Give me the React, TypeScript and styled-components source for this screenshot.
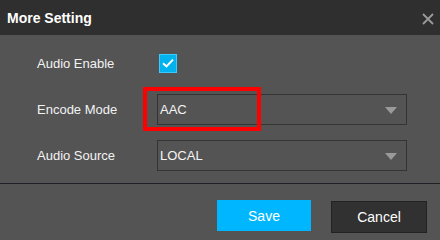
import React from 'react';
import styled, { createGlobalStyle } from 'styled-components';

const GlobalStyle = createGlobalStyle`
  html, body {
    margin: 0;
    padding: 0;
    background: #545454;
  }
  body {
    font-family: "Liberation Sans", Arial, sans-serif;
  }
`;

const Dialog = styled.div`
  width: 440px;
  height: 240px;
  background: #545454;
  display: flex;
  flex-direction: column;
  overflow: hidden;
`;

const Header = styled.div`
  height: 35px;
  background: #2f2f2f;
  display: flex;
  align-items: center;
  justify-content: space-between;
  padding: 0 4px 0 7px;
  box-sizing: border-box;
`;

const Title = styled.h2`
  margin: 0;
  color: #fff;
  font-size: 14px;
  font-weight: bold;
`;

const CloseButton = styled.button`
  width: 16px;
  height: 16px;
  padding: 0;
  border: 0;
  background: none;
  display: flex;
  align-items: center;
  justify-content: center;
  margin-top: 2px;
`;

const Body = styled.div`
  padding: 12px 0 12px 37px;
  display: flex;
  flex-direction: column;
  gap: 14px;
  border-bottom: 1px solid #1f1f26;
`;

const Row = styled.div`
  height: 32px;
  display: grid;
  grid-template-columns: 120px 250px;
  align-items: center;
`;

const Label = styled.span`
  color: #f2f2f2;
  font-size: 13px;
`;

const CheckBox = styled.span`
  width: 16px;
  height: 17px;
  margin-left: 2px;
  background: #00b2ee;
  border: 1px solid #3ccaff;
  display: flex;
  align-items: center;
  justify-content: center;
`;

const SelectWrap = styled.div`
  position: relative;
`;

const Select = styled.div`
  height: 31px;
  box-sizing: border-box;
  border: 1px solid #343434;
  display: flex;
  align-items: center;
  justify-content: space-between;
  padding: 0 9px 0 2px;
  color: #f4f4f4;
  font-size: 13px;
`;

const Arrow = styled.span`
  width: 0;
  height: 0;
  border-left: 6px solid transparent;
  border-right: 6px solid transparent;
  border-top: 7px solid #9a9a9a;
  margin-top: 2px;
`;

const Highlight = styled.div`
  position: absolute;
  left: -14px;
  top: -7px;
  width: 118px;
  height: 44px;
  box-sizing: border-box;
  border: 4px solid #ff0000;
  pointer-events: none;
`;

const Footer = styled.div`
  display: flex;
  justify-content: flex-end;
  gap: 20px;
  padding: 16px 13px 0 0;
`;

const Button = styled.button<{ $primary?: boolean }>`
  width: ${p => (p.$primary ? '94px' : '96px')};
  height: ${p => (p.$primary ? '31px' : '32px')};
  margin-top: ${p => (p.$primary ? '0' : '1px')};
  font-family: "Liberation Sans", Arial, sans-serif;
  font-size: 14px;
  color: #fff;
  background: ${p => (p.$primary ? '#00b7ff' : '#313131')};
  border: ${p => (p.$primary ? '0' : '1px solid #222')};
  box-sizing: border-box;
`;

const X = () => (
  <svg width="12" height="12" viewBox="0 0 12 12">
    <path d="M1 1L11 11M11 1L1 11" stroke="#9a9a9a" strokeWidth="1.8" />
  </svg>
);

const Check = () => (
  <svg width="12" height="10" viewBox="0 0 12 10">
    <path d="M1 5.2L4.5 8.4L11 1.6" stroke="#fff" strokeWidth="2" fill="none" />
  </svg>
);

export default function App() {
  return (
    <>
      <GlobalStyle />
      <Dialog>
        <Header>
          <Title>More Setting</Title>
          <CloseButton>
            <X />
          </CloseButton>
        </Header>
        <Body>
          <Row>
            <Label>Audio Enable</Label>
            <CheckBox>
              <Check />
            </CheckBox>
          </Row>
          <Row>
            <Label>Encode Mode</Label>
            <SelectWrap>
              <Select>
                AAC
                <Arrow />
              </Select>
              <Highlight />
            </SelectWrap>
          </Row>
          <Row>
            <Label>Audio Source</Label>
            <SelectWrap>
              <Select>
                LOCAL
                <Arrow />
              </Select>
            </SelectWrap>
          </Row>
        </Body>
        <Footer>
          <Button $primary>Save</Button>
          <Button>Cancel</Button>
        </Footer>
      </Dialog>
    </>
  );
}
